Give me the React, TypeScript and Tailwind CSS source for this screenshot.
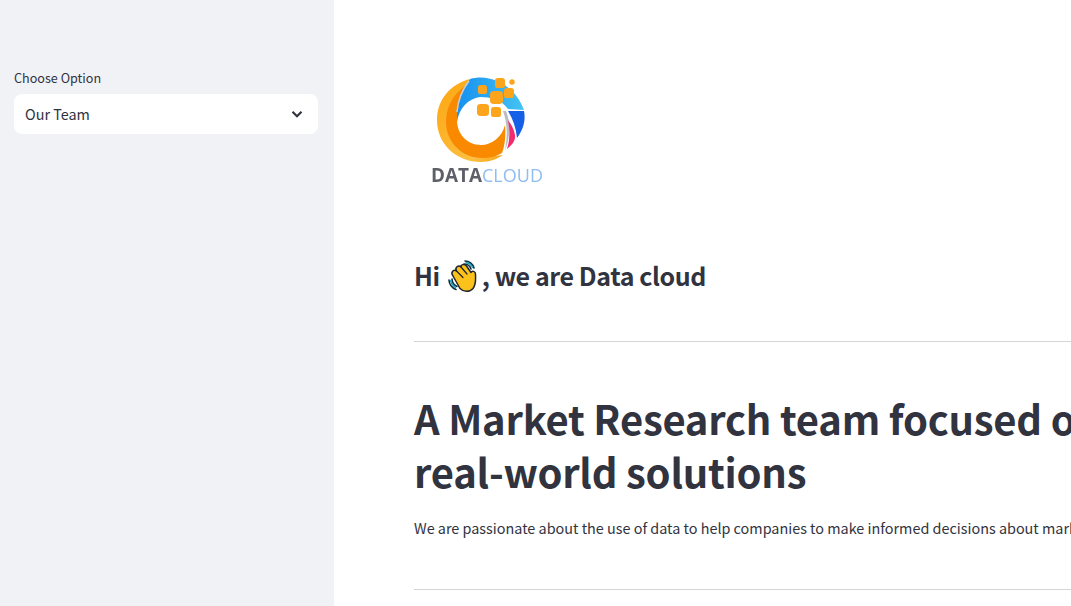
import React from "react";

const font = { fontFamily: '"Noto Sans CJK SC", "Noto Sans", sans-serif' };

const dots = [
  { x: 495, y: 78, s: 10 },
  { x: 478, y: 85, s: 9 },
  { x: 490, y: 91, s: 13 },
  { x: 504, y: 88, s: 10 },
  { x: 477, y: 104, s: 12 },
  { x: 491, y: 107, s: 10 },
];

// viewBox is in page pixels so the shapes can be read straight off the screenshot
const Logo = () => (
  <svg width="146" height="134" viewBox="414 61 146 134" className="block">
    <defs>
      <linearGradient id="crescent" x1="0" y1="0" x2="1" y2="1">
        <stop offset="0" stopColor="#fda50f" />
        <stop offset="0.75" stopColor="#fcc043" />
        <stop offset="1" stopColor="#f9a314" />
      </linearGradient>
      <linearGradient id="sky" x1="0" y1="0" x2="1" y2="0">
        <stop offset="0" stopColor="#1690f0" />
        <stop offset="1" stopColor="#45c3f3" />
      </linearGradient>
      <filter id="soft">
        <feGaussianBlur stdDeviation="0.5" />
      </filter>
    </defs>
    <g filter="url(#soft)">
      <path d="M470 79 C490 73 515 85 524 110 L508 109 C502 100 490 97 480 97 C468 99 459 108 457 122 C455 105 460 90 470 79Z" fill="url(#sky)" />
      <path d="M470 79 C450 84 437 100 437 120 C437 144 456 162 481 162 C490 162 497 159 503 155 C490 157 470 155 458 140 C448 125 452 100 470 79Z" fill="url(#crescent)" />
      <path d="M466 85 C452 95 446 108 446 122 C446 142 462 158 482 158 C490 158 497 156 502 153 C505 145 506 135 505 125 C502 137 492 145 481 145 C467 145 457 134 457 120 C457 108 460 97 466 85Z" fill="#f98a06" />
      <path d="M469 81 C462 90 458 100 457 112" fill="none" stroke="#c9ccd1" strokeWidth="1.5" />
      <path d="M503 111 C507 122 508 134 505 150 C510 140 511 122 506 111Z" fill="#b9bcc3" />
      <path d="M508 111 L524 111 C526 121 523 130 517 138 C516 128 513 119 508 111Z" fill="#1560e8" />
      <path d="M508 120 C510 130 510 140 507 149 C512 145 516 140 515 135 C514 129 511 124 508 120Z" fill="#f52a6e" />
      {dots.map((d) => (
        <rect key={d.x + "-" + d.y} x={d.x} y={d.y} width={d.s} height={d.s} rx={d.s / 3.5} fill="#fba41c" />
      ))}
      <circle cx="512" cy="82" r="2.7" fill="#fba41c" />
      <text x="431" y="182" fontSize="19" fontWeight="700" fill="#5d6167" textLength="51" lengthAdjust="spacingAndGlyphs" style={{ fontFamily: '"Open Sans", sans-serif' }}>DATA</text>
      <text x="482" y="182" fontSize="19" fill="#8fbdf0" textLength="61" lengthAdjust="spacingAndGlyphs" style={{ fontFamily: '"Open Sans", sans-serif' }}>CLOUD</text>
    </g>
  </svg>
);

const Wave = () => (
  <svg width="36" height="36" viewBox="4 2 36 36" className="shrink-0">
    <path d="M7 24 C7 28 10 32 14 33.5 M10 23 C10 26 12 29 15 30.5 M23 5 C27 5 31 8 32 12 M22 8 C25 8 28 10 29 13" fill="none" stroke="#12313f" strokeWidth="1.6" strokeLinecap="round" />
    <path d="M8.5 24.5 C9 27 11 30 13.5 31.5 M24 6.5 C26.5 7 29.5 9 30.5 11.5" fill="none" stroke="#1a9fc0" strokeWidth="1.3" strokeLinecap="round" />
    <path d="M11 20 C8 16 12 13 14.5 15 C12.5 11.5 16.5 8.5 19 11 C18.5 8.5 22.5 7.5 24.5 10 L29 16.5 C30 14.5 33.5 15 33.5 18 C33.5 23 34.5 28 31 32.5 C27.5 36.5 21.5 36 18 32.5 Z" fill="#fcc21b" stroke="#1f2530" strokeWidth="1.5" strokeLinejoin="round" />
    <path d="M14.5 15 L21 21.5 M19 11 L25 18" fill="none" stroke="#1f2530" strokeWidth="1.2" strokeLinecap="round" />
  </svg>
);

const App = () => {
  return (
    <div className="flex h-[606px] w-[1071px] overflow-hidden bg-white text-[#31333f]" style={font}>
      <aside className="w-[334px] shrink-0 bg-[#f0f2f6] px-[14px] pt-[69px]">
        <label className="block text-[12.6px] leading-[18px]">Choose Option</label>
        <div className="mt-[7px] flex h-[40px] w-[304px] items-center justify-between rounded-lg bg-white pl-[11px] pr-[14px] text-[14.4px]">
          <span>Our Team</span>
          <svg width="14" height="14" viewBox="0 0 14 14">
            <path d="M2.5 4.8 L7 9.2 L11.5 4.8" fill="none" stroke="#31333f" strokeWidth="2.2" />
          </svg>
        </div>
      </aside>

      <main className="min-w-0 flex-1 overflow-hidden pl-[80px] pt-[61px]">
        <div className="w-[1200px]">
          <Logo />
          <h3 className="mt-[58px] flex h-[46px] items-center text-[25px] font-semibold tracking-[-0.42px]">
            <span>Hi</span>
            <span className="ml-[6px]"><Wave /></span>
            <span>, we are Data cloud</span>
          </h3>
          <hr className="mt-[42px] border-t border-[#d4d5d9]" />
          <h1 className="mt-[50px] text-[40px] font-bold leading-[53px] tracking-[-0.25px]">
            A Market Research team focused on creating
            <br />
            real-world solutions
          </h1>
          <p className="mt-[18px] whitespace-nowrap text-[14.4px] leading-[24px]">
            We are passionate about the use of data to help companies to make informed decisions about market trends and customers.
          </p>
          <hr className="mt-[49px] border-t border-[#d4d5d9]" />
        </div>
      </main>
    </div>
  );
};

export default App;
